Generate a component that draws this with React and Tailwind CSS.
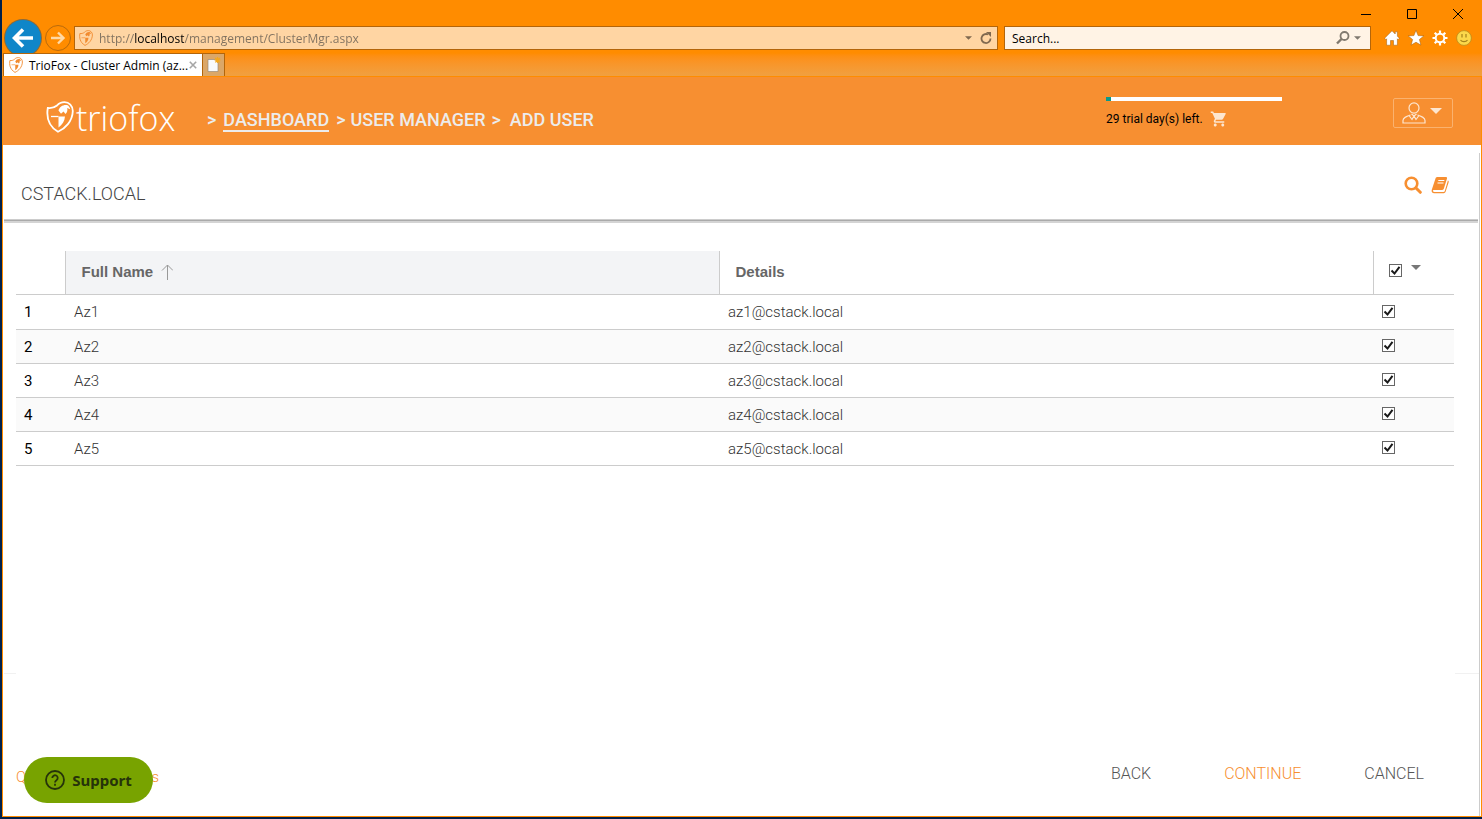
import React from "react";
import { MdShoppingCart } from "react-icons/md";

const users = [1, 2, 3, 4, 5].map((n) => ({
  id: n,
  name: `Az${n}`,
  details: `az${n}@cstack.local`,
}));

const Shield = ({ className }) => (
  <svg viewBox="0 0 28 32" className={className} fill="none" stroke="currentColor" aria-hidden="true">
    <path d="M11 4.500C8 7 5 7.400 1.800 7 .5 15 1.500 24.500 12 30.800 19 27.500 26.500 20.500 26.800 10 26.800 4.500 23 1.200 18.500 1.200 15.500 1.200 13 2.200 11 4.500Z" strokeWidth="1.800" />
    <path d="M12.500 15.500H19c-.3 4.500-2.800 8.500-6.500 11z" fill="currentColor" stroke="none" />
    <path d="M5 15.500h7.500" strokeWidth="1.300" />
    <path d="M12.500 9.500c1-3.800 4.500-6 8.500-5.500 1.500.4 2.800 2 3.200 4.200l-3-1.200c.6 2.300 0 4.500-1.700 6l-2-2.500-2.500 2.200z" fill="currentColor" stroke="none" />
  </svg>
);

const Caret = ({ className }) => (
  <svg viewBox="0 0 10 5" className={className} fill="currentColor" aria-hidden="true">
    <path d="M0 0h10L5 5z" />
  </svg>
);

const Checkbox = ({ label }) => (
  <label className="relative block h-[13px] w-[13px]">
    <input
      type="checkbox"
      defaultChecked
      aria-label={label}
      className="peer block h-[13px] w-[13px] appearance-none border border-[#666] bg-white"
    />
    <svg
      viewBox="0 0 13 13"
      className="pointer-events-none absolute inset-0 hidden h-[13px] w-[13px] peer-checked:block"
      fill="none"
      stroke="#1a1a1a"
      strokeWidth="2"
      aria-hidden="true"
    >
      <path d="M2.500 6.500 5.500 9.500 10.500 2.800" />
    </svg>
  </label>
);

const BrowserChrome = () => (
  <div className="bg-[#ff8c00] font-['Open_Sans',sans-serif] text-xs text-black">
    {/* Window buttons */}
    <div className="flex h-[26px] justify-end pt-1 pr-px">
      <button aria-label="Minimize" className="flex h-5 w-[46px] items-center justify-center">
        <svg viewBox="0 0 10 10" className="h-[10px] w-[10px]" stroke="#000"><path d="M0 5.500h10" /></svg>
      </button>
      <button aria-label="Maximize" className="flex h-5 w-[46px] items-center justify-center">
        <svg viewBox="0 0 10 10" className="h-[10px] w-[10px]" fill="none" stroke="#000"><path d="M.5.5h9v9h-9z" /></svg>
      </button>
      <button aria-label="Close" className="flex h-5 w-[46px] items-center justify-center">
        <svg viewBox="0 0 10 10" className="h-[10px] w-[10px]" stroke="#000"><path d="M0 0l10 10M10 0L0 10" /></svg>
      </button>
    </div>

    {/* Address row */}
    <div className="flex h-6 items-center pl-[3px] pr-[10px]">
      <button aria-label="Back" className="flex h-9 w-9 shrink-0 items-center justify-center rounded-full bg-[#0f86c9] ring-1 ring-[#8a6a3a]">
        <svg viewBox="0 0 22 20" className="h-5 w-[22px]" fill="none" stroke="#fff" strokeWidth="3.600">
          <path d="M21 10H3M11 1.500 2.500 10l8.500 8.500" />
        </svg>
      </button>
      <button aria-label="Forward" className="ml-1 flex h-[26px] w-[26px] shrink-0 items-center justify-center rounded-full border border-[#b86a0c]">
        <svg viewBox="0 0 16 14" className="h-[14px] w-4" fill="none" stroke="#ffd9a6" strokeWidth="2.400">
          <path d="M1 7h12M8 1.500 13.500 7 8 12.500" />
        </svg>
      </button>
      <div className="ml-[3px] flex h-6 min-w-0 flex-1 items-center border border-[#b3650a] bg-[#ffd5a3] pl-1 pr-[5px]">
        <Shield className="h-4 w-[14px] text-[#f28a2e]" />
        <input
          aria-label="Address"
          defaultValue="http://localhost/management/ClusterMgr.aspx"
          className="ml-[6px] min-w-0 flex-1 bg-[linear-gradient(90deg,#80715f_36px,#000_36px,#000_85px,#80715f_85px)] bg-clip-text pt-[2px] text-xs text-transparent outline-none"
        />
        <Caret className="h-1 w-[7px] text-[#80694f]" />
        <button aria-label="Refresh" className="ml-2">
          <svg viewBox="0 0 12 12" className="h-3 w-3" fill="none" stroke="#80694f" strokeWidth="1.800">
            <path d="M10.500 6.500A4.500 4.500 0 1 1 8 2.500" />
            <path d="M6 0h5v5z" fill="#80694f" stroke="none" />
          </svg>
        </button>
      </div>
      <div className="ml-[6px] flex h-6 w-[367px] shrink-0 items-center border border-[#b3650a] bg-[#fff3e5] pl-[7px] pr-[9px]">
        <input aria-label="Search" placeholder="Search..." className="min-w-0 flex-1 pt-[2px] text-xs outline-none placeholder:text-black" />
        <button aria-label="Run search">
          <svg viewBox="0 0 14 14" className="h-[14px] w-[14px]" fill="none" stroke="#80796f" strokeWidth="1.800">
            <circle cx="8.500" cy="5" r="4" />
            <path d="M5.500 8 1 12.500" strokeWidth="2.400" />
          </svg>
        </button>
        <Caret className="ml-1 h-1 w-[7px] text-[#80796f]" />
      </div>
      <div className="ml-[13px] flex shrink-0 items-center gap-2 text-white">
        <button aria-label="Home">
          <svg viewBox="0 0 16 16" className="h-4 w-4" fill="#fff" stroke="#9a5c10" strokeWidth=".5">
            <path d="M8 .8.6 8.200l1.300 1.300.7-.7V15.200h3.900v-4.700h3v4.700h3.900V8.800l.7.7 1.300-1.300-2-2V1.800h-2.200v2.200z" />
          </svg>
        </button>
        <button aria-label="Favorites">
          <svg viewBox="0 0 16 16" className="h-4 w-4" fill="#fff" stroke="#9a5c10" strokeWidth=".5">
            <path d="M8 .3l2.100 5.300 5.700.3-4.400 3.600 1.500 5.600L8 12.200l-4.900 2.900 1.500-5.600L.2 5.900l5.700-.3z" />
          </svg>
        </button>
        <button aria-label="Tools">
          <svg viewBox="0 0 16 16" className="h-4 w-4" fill="none" stroke="#fff">
            <circle cx="8" cy="8" r="4.300" strokeWidth="2" />
            <path d="M8 .5v2.500M8 13v2.500M.5 8H3M13 8h2.500M2.700 2.700l1.800 1.800M11.500 11.500l1.800 1.800M2.700 13.300l1.800-1.800M11.500 4.500l1.800-1.800" strokeWidth="2.200" />
          </svg>
        </button>
        <button aria-label="Send a smile">
          <svg viewBox="0 0 16 16" className="h-4 w-4">
            <circle cx="8" cy="8" r="7.400" fill="#fbd84b" stroke="#b98a1a" strokeWidth=".8" />
            <path d="M6 4v3.500M10 4v3.500M4.500 10c1.500 2.200 5.500 2.200 7 0" fill="none" stroke="#a5821c" strokeWidth="1.200" />
          </svg>
        </button>
      </div>
    </div>

    {/* Tabs */}
    <div className="mt-[3px] flex h-6 border-b border-[#ff8c00] bg-linear-to-b from-[#ff8c00] to-[#f0a040] pl-px">
      <div className="relative flex w-[200px] items-center border border-b-0 border-[#b3650a] bg-white px-[5px]">
        <Shield className="h-4 w-[14px] text-[#f28a2e]" />
        <span className="ml-[6px] flex-1 pt-px whitespace-nowrap">TrioFox - Cluster Admin (az...</span>
        <button aria-label="Close tab">
          <svg viewBox="0 0 10 10" className="h-2 w-2" stroke="#a6a6a6" strokeWidth="2"><path d="M1 1l8 8M9 1L1 9" /></svg>
        </button>
      </div>
      <button aria-label="New tab" className="flex w-[22px] items-center justify-center border border-b-0 border-l-0 border-[#b3650a] bg-[#dba768]">
        <svg viewBox="0 0 14 16" className="h-4 w-[14px] shrink-0">
          <path d="M1 2.500h7l3 3v9H1z" fill="#f8fafc" stroke="#9c8b75" strokeWidth=".7" />
          <path d="M10.500 0v6M7.500 3h6M8.300 1l4.400 4.400M12.700 1 8.300 5.400" stroke="#f5a81c" strokeWidth="1.200" />
        </svg>
      </button>
    </div>
  </div>
);

const AppHeader = () => (
  <header className="flex h-[68px] bg-[#f78f31] pl-[43px] pr-7">
    <a href="#home" aria-label="triofox" className="flex w-[161px] items-center pt-3 text-white">
      <Shield className="h-8 w-7" />
      <span className="ml-[2px] pt-[2px] font-['Open_Sans',sans-serif] text-[34px] leading-8 font-light">triofox</span>
    </a>
    <nav className="flex flex-1 items-baseline pt-[29px] text-lg font-medium text-[#ececec]">
      <span>&gt;</span>
      <a href="#dashboard" className="ml-[7px] border-b-2 border-[#ececec] leading-5">DASHBOARD</a>
      <span className="ml-[7px]">&gt;</span>
      <a href="#users" className="ml-[5px]">USER MANAGER</a>
      <span className="ml-[6px]">&gt;</span>
      <a href="#add" className="ml-[9px]">ADD USER</a>
    </nav>
    <div className="mr-[111px] w-44 pt-5 text-xs text-black">
      <div className="h-1 bg-white">
        <div className="h-1 w-[5px] bg-[#0a9a8a]" />
      </div>
      <div className="mt-[9px] flex items-center gap-[7px]">
        <span>29 trial day(s) left.</span>
        <a href="#buy" aria-label="Buy"><MdShoppingCart className="h-[18px] w-[18px] text-[#fde6d0]" /></a>
      </div>
    </div>
    <button aria-label="Account" className="mt-[21px] flex h-[30px] w-[60px] items-center gap-1 rounded-xs border border-[#fab26f] pl-2 text-[#fde6d0]">
      <svg viewBox="0 0 24 22" className="h-[22px] w-6" fill="none" stroke="currentColor" strokeWidth="1.200">
        <ellipse cx="12" cy="6" rx="5" ry="5.200" />
        <path d="M8.500 13C4 14.500 1 15.500 1 18.500v2.500h22v-2.500c0-3-3-4-7.500-5.500M7 13.500l3 4 2-3.500 2 3.500 3-4M9.500 12l2.500 2 2.500-2" />
      </svg>
      <Caret className="mb-1 h-[6px] w-3" />
    </button>
  </header>
);

const UserTable = () => (
  <table className="w-full table-fixed border-collapse text-left">
    <thead>
      <tr className="h-[43px] border-b border-[#ccc] font-['Liberation_Sans',sans-serif] text-[15px] text-[#666]">
        <th className="w-[49px]" aria-label="Row" />
        <th className="border-x border-[#ccc] bg-[#f3f4f6] px-4">
          <span className="flex items-center gap-2">
            Full Name
            <svg viewBox="0 0 12 16" className="h-4 w-3" fill="none" stroke="#999">
              <path d="M6.500 16V1M1 6.500l5.500-5.500L12 6.500" />
            </svg>
          </span>
        </th>
        <th className="border-r border-[#ccc] px-4">Details</th>
        <th className="w-[81px] pb-1 pl-[15px]">
          <span className="flex items-start gap-[9px]">
            <Checkbox label="Select all" />
            <button aria-label="Selection options" className="mt-px"><Caret className="h-[5px] w-[10px] text-[#777]" /></button>
          </span>
        </th>
      </tr>
    </thead>
    <tbody>
      {users.map((user) => (
        <tr key={user.id} className="h-[34px] border-b border-[#ccc] text-[15px] font-light text-[#333] first:h-[35px] even:bg-[#fafafa]">
          <td className="pt-[2px] pl-2 font-normal text-black">{user.id}</td>
          <td className="pt-[2px] pl-[9px]">{user.name}</td>
          <td className="pt-[2px] pl-[9px]">{user.details}</td>
          <td className="pb-px pl-[9px]"><Checkbox label={`Select ${user.name}`} /></td>
        </tr>
      ))}
    </tbody>
  </table>
);

const Footer = () => (
  <footer className="relative h-[143px] shrink-0">
    <div className="flex justify-between">
      <span className="h-px w-3 bg-[#f1f1f1]" />
      <span className="h-px w-6 bg-[#f1f1f1]" />
    </div>
    <div className="flex items-center justify-between pt-[86px] pr-[55px] pl-3 font-light">
      <a href="#options" className="flex w-[143px] justify-between pt-[6px] text-[15px] text-[#f78f31]">
        <span>Q</span>
        <span>s</span>
      </a>
      <div className="flex text-base text-[#555]">
        <button>BACK</button>
        <button className="ml-[73px] text-[#f78f31]">CONTINUE</button>
        <button className="ml-[63px]">CANCEL</button>
      </div>
    </div>
    {/* Support launcher floats over the footer link */}
    <button className="absolute bottom-[13px] left-5 flex h-[46px] w-[129px] items-center justify-center gap-[7px] rounded-full bg-[#78a300] font-['Noto_Sans',sans-serif] text-[15px] font-bold text-[#26330a]">
      <svg viewBox="0 0 20 20" className="h-5 w-5" fill="none" stroke="currentColor" strokeWidth="1.800">
        <circle cx="10" cy="10" r="9" />
        <path d="M7.300 8a2.700 2.700 0 1 1 4.200 2.200c-1 .7-1.500 1.100-1.500 2.300" />
        <path d="M10 13.700v2" />
      </svg>
      Support
    </button>
  </footer>
);

const App = () => {
  return (
    <div className="min-h-screen bg-[#00204a] pb-[2px] pl-[2px] font-['Roboto',sans-serif]">
      <div className="flex min-h-[calc(100vh-2px)] flex-col border-b border-[#ff8c00]">
        <BrowserChrome />
        <div className="flex flex-1 flex-col border-x border-[#ff8c00] bg-white">
          <AppHeader />
          <main className="mt-2 mr-px flex flex-1 flex-col border-r border-[#ccc] pl-px">
            <div className="flex h-[66px] items-start justify-between pr-[30px] pl-[17px]">
              <h1 className="pt-[27px] text-lg font-light text-[#444]">CSTACK.LOCAL</h1>
              <div className="flex gap-[9px] pt-[23px] text-[#f78f31]">
                <button aria-label="Search users">
                  <svg viewBox="0 0 18 18" className="h-[18px] w-[18px]" fill="none" stroke="currentColor">
                    <circle cx="7.500" cy="7.500" r="5.800" strokeWidth="2.600" />
                    <path d="M12 12l4.300 4.300" strokeWidth="3" strokeLinecap="round" />
                  </svg>
                </button>
                <button aria-label="Guide">
                  <svg viewBox="0 0 18 18" className="h-[18px] w-[18px]" fill="currentColor">
                    <path d="M6.500 1h8.300c1 0 1.500.7 1.200 1.600l-3.200 10.200c-.2.700-.8 1.200-1.600 1.200H3c-1 0-1.300.7-1 1.300.3.600.8.700 1.500.7h9c.6 0 1-.3 1.200-.8L16.900 4.500c.8.400 1 1.100.7 1.900l-3 9.400c-.3.800-1 1.400-1.900 1.400H3.200C1.300 17.200.2 15.500.7 14L4.500 2.500C4.800 1.500 5.500 1 6.500 1z" />
                    <path d="M7.300 4.500h6M6.500 7h6" stroke="#fff" strokeWidth="1.200" />
                  </svg>
                </button>
              </div>
            </div>
            <div className="mr-px h-1 border-t border-b-2 border-t-[#ccc] border-b-[#d4d4d4] bg-[#aaa]" />
            <div className="flex-1 pt-7 pr-[25px] pl-3">
              <UserTable />
            </div>
            <Footer />
          </main>
        </div>
      </div>
    </div>
  );
};

export default App;
